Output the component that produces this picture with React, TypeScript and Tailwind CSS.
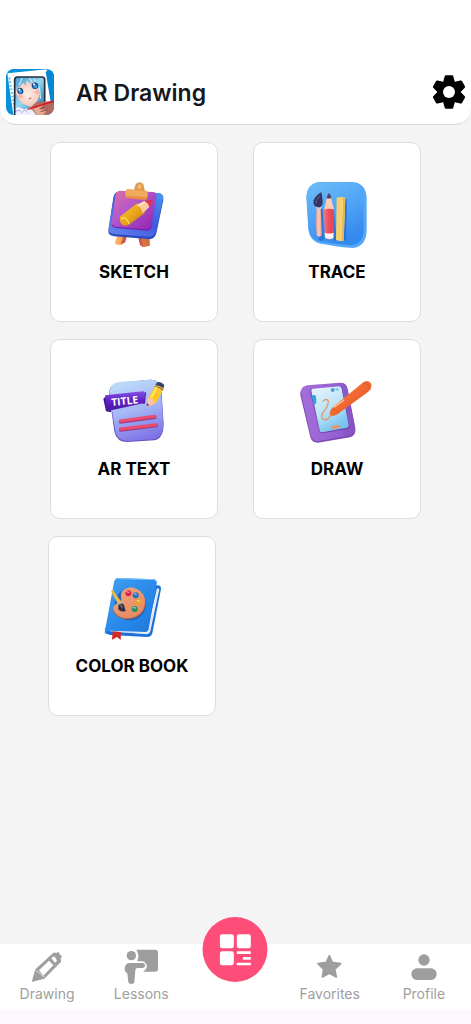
import type { ReactNode } from "react";

function AppLogo() {
  return (
    <svg viewBox="0 0 144 138" className="h-[46px] w-12 shrink-0" aria-hidden="true">
      <defs>
        <clipPath id="logoClip"><rect width="144" height="138" rx="23" /></clipPath>
        <clipPath id="screenClip"><rect x="26" y="24" width="90" height="130" rx="8" /></clipPath>
        <linearGradient id="hair" x1="0" y1="0" x2="1" y2="1">
          <stop offset="0" stopColor="#4796cf" /><stop offset="0.5" stopColor="#94d7f2" /><stop offset="1" stopColor="#2678b4" />
        </linearGradient>
        <radialGradient id="skin"><stop offset="0" stopColor="#fff0e9" /><stop offset="1" stopColor="#f5c6bb" /></radialGradient>
      </defs>
      <g clipPath="url(#logoClip)">
        <rect width="144" height="138" fill="#0790dc" />
        <path d="M4 13 122 1 140 104 111 138H22z" fill="#fff" />
        <path d="M10 26 25 116" stroke="#65b8df" strokeWidth="6" strokeDasharray="5 6" />
        <path d="M119 8 144 0V106L137 116z" fill="#0587d1" />
        <g clipPath="url(#screenClip)">
          <rect x="24" y="20" width="94" height="118" fill="#bae2ef" />
          <path d="M24 20h93v84l-19 20H34L24 92z" fill="url(#hair)" />
          <path d="M29 61Q35 40 60 36L95 42Q109 76 91 99L76 114 50 104Q27 84 29 61z" fill="url(#skin)" />
          <path d="M26 70 46 23H113l5 48-17 33q6-29-8-53L76 32l2 16-17-16-1 20-8-11-14 14z" fill="url(#hair)" />
          <path d="M48 27 40 48M70 26 78 40M83 29 100 55 104 89" stroke="#d6f7ff" strokeWidth="3" fill="none" />
          <ellipse cx="43" cy="66" rx="9" ry="10" fill="#1a4f88" transform="rotate(-15 43 66)" />
          <ellipse cx="87" cy="50" rx="10" ry="10" fill="#164b87" transform="rotate(-15 87 50)" />
          <ellipse cx="43" cy="68" rx="5" ry="6" fill="#3b9be1" /><ellipse cx="88" cy="52" rx="6" ry="6" fill="#3598e0" />
          <circle cx="40" cy="62" r="3" fill="#fff" /><circle cx="84" cy="46" r="3" fill="#fff" />
          <ellipse cx="42" cy="83" rx="9" ry="5" fill="#f2a7a3" opacity=".7" /><ellipse cx="93" cy="69" rx="8" ry="5" fill="#f2a7a3" opacity=".7" />
          <path d="m68 90 8-3" stroke="#be555c" strokeWidth="3" />
          <path d="m24 119 15-5 15 7 19-5 16 22H25z" fill="#eff0ff" />
          <path d="m27 128 12-5 8 8 10-9 8 9" stroke="#aaaadd" strokeWidth="3" fill="none" />
        </g>
        <rect x="26" y="24" width="90" height="130" rx="8" fill="none" stroke="#222e38" strokeWidth="5" />
        <path d="M62 123q3-8 14-10l12-11q9-7 20-4l28-1 8 9v32H91l-12-16z" fill="#b06c60" />
        <path d="M67 122q3-6 16-7l14-7 14 1-9 12 21 2-12 15H93l-11-17z" fill="#e3aa95" />
        <path d="m101 119 17-5m-14 14 22-6" stroke="#8f4e48" strokeWidth="3" />
        <path d="m65 119 12-4 65-21v6l-62 19z" fill="#d91e26" />
      </g>
    </svg>
  );
}

function GearIcon() {
  return (
    <svg viewBox="-51 -51 102 102" className="size-[34px]" aria-hidden="true">
      <g stroke="currentColor" strokeWidth="8" strokeLinejoin="round" fill="currentColor">
        <circle r="31" />
        <path d="M-13-32-9-46H9L13-32V32L9 46H-9L-13 32z" />
        <path d="M-13-32-9-46H9L13-32V32L9 46H-9L-13 32z" transform="rotate(60)" />
        <path d="M-13-32-9-46H9L13-32V32L9 46H-9L-13 32z" transform="rotate(120)" />
      </g>
      <circle r="18" fill="#fff" />
    </svg>
  );
}

function SketchArt() {
  return (
    <svg viewBox="-3 0 270 240" className="h-20 w-[90px]" aria-hidden="true">
      <defs>
        <linearGradient id="board" x1="0" y1="0" x2="1" y2="1"><stop stopColor="#e0709f" /><stop offset=".4" stopColor="#b458cb" /><stop offset="1" stopColor="#8c1fae" /></linearGradient>
        <linearGradient id="boardBlue" x1="0" y1="1" x2="1" y2="0"><stop stopColor="#6589ee" /><stop offset=".55" stopColor="#3f5ade" /><stop offset="1" stopColor="#4b9bef" /></linearGradient>
        <linearGradient id="wood"><stop stopColor="#ffb569" /><stop offset="1" stopColor="#ce6a3c" /></linearGradient>
        <linearGradient id="gold" x1="0" y1="0" x2="1" y2="1"><stop stopColor="#ffc538" /><stop offset=".55" stopColor="#e7a315" /><stop offset="1" stopColor="#b76920" /></linearGradient>
      </defs>
      <path d="m83 193-8 24q0 7 8 8l13-1 9-25zM145 201l6 25q4 7 15 4l13-3q2-8-2-27z" fill="url(#wood)" />
      <path d="m100 199-8 24 13-5 6-20zM145 202l5 23 9 3-4-27z" fill="#d35445" />
      <path d="M83 67 207 70q15 3 13 19l-20 97q-4 20-20 22L72 199q-18-2-17-18L70 84q3-15 13-17z" fill="#2c4cc0" />
      <path d="M84 65 207 69q14 3 12 16l-20 96q-4 18-19 19L73 192q-18-2-17-15L71 80q3-14 13-15z" fill="url(#boardBlue)" />
      <path d="M88 62 191 66q9 2 8 13l-15 92q-2 11-12 11l-97-9q-11-3-10-12L77 72q2-8 11-10z" fill="url(#board)" />
      <path d="M66 164q2 6 10 8l96 8q9 0 12-10" fill="none" stroke="#6d1cae" strokeWidth="3" />
      <path d="m131 62 6-19q12-13 23 0l5 21z" fill="#e09850" /><circle cx="149" cy="50" r="7" fill="#f8b768" />
      <path d="m111 58 55 4q9 2 8 10l-2 13q-2 6-9 5l-51-5q-7-2-6-8l1-12z" fill="#e98d45" />
      <path d="m111 58 55 4q7 1 7 5l-2 15-65-5 1-14z" fill="#f0aa5c" />
      <path d="m91 139 50-39q18 2 24 28l-48 36q-20 10-27-11-2-9 1-14z" fill="url(#gold)" />
      <path d="M94 147q14-10 23 14" fill="none" stroke="#ffe06a" strokeWidth="4" />
      <path d="m140 105 23-13q15 4 15 19l-20 19q-4-20-18-25z" fill="#ffc8a3" />
      <path d="m163 94 20-5q5 0 4 6l-9 18q-2-15-15-19z" fill="#dc3344" />
      <path d="m145 108 20-12" stroke="#fff0cc" strokeWidth="4" />
    </svg>
  );
}

function TraceArt() {
  return (
    <svg viewBox="6 0 270 240" className="h-20 w-[90px]" aria-hidden="true">
      <defs>
        <linearGradient id="traceBlue" x1=".1" y1="0" x2=".5" y2="1"><stop stopColor="#6abcf8" /><stop offset=".6" stopColor="#4c9ff5" /><stop offset="1" stopColor="#3389ee" /></linearGradient>
        <linearGradient id="brushWood"><stop stopColor="#f0a292" /><stop offset=".5" stopColor="#ffc9b4" /><stop offset="1" stopColor="#e99080" /></linearGradient>
        <linearGradient id="redPencil"><stop stopColor="#ff7670" /><stop offset=".4" stopColor="#f04f60" /><stop offset="1" stopColor="#e44459" /></linearGradient>
      </defs>
      <path d="M86 36H184Q228 37 230 84V182Q229 227 190 234q-32-1-62-7-24-5-37-6-32-8-36-43L49 82q1-39 37-46z" fill="#55a8f6" />
      <path d="M86 37H178Q219 38 221 84v98q-2 39-37 44-32-1-57-6l-33-5q-33-5-38-38L50 82q1-39 36-45z" fill="url(#traceBlue)" />
      <path d="M91 116h7l4 92-8 5-8-4zM130 112l10 95-8 9zM166 87h5l-3 124-8 2z" fill="#2a75d6" />
      <path d="m80 115 12-2 4 82q-7 10-16 0l-2-32z" fill="url(#brushWood)" />
      <path d="m77 104 18-2-1 15-14 2z" fill="#bfcdea" />
      <path d="M94 66q-18 11-23 25-2 13 5 18 15 8 21-4 3-11-3-39z" fill="#343562" /><path d="M89 79q-11 10-11 21" stroke="#696589" strokeWidth="3" fill="none" />
      <path d="M114 70q3-4 5 0l13 48-30 2z" fill="#ffcbb4" /><path d="M116 69q-3 2-6 15 7 4 14-1-4-14-8-14z" fill="#494567" />
      <path d="M102 119q15-6 30 0l-1 84q-13 9-26 0z" fill="url(#redPencil)" /><path d="M104 188q13 5 27 0l-1 16q-10 7-24 0z" fill="#fff5f3" />
      <path d="M140 83q13-4 26 1l-5 128q-9 3-23-2z" fill="#f6d16c" /><path d="m160 82 6 1-5 129-6 1z" fill="#e2b65b" />
      <path d="M144 96h6m-6 13h4m-4 13h6m-6 13h4m-4 13h6m-6 13h4m-4 13h6" stroke="#e6bd5e" strokeWidth="2" />
    </svg>
  );
}

function TextArt() {
  return (
    <svg viewBox="-3 -9 270 240" className="h-20 w-[90px]" aria-hidden="true">
      <defs>
        <linearGradient id="paper" x1=".3" y1="0" x2=".6" y2="1"><stop stopColor="#bcdcf8" /><stop offset=".5" stopColor="#a5b6f6" /><stop offset="1" stopColor="#7d72e6" /></linearGradient>
        <linearGradient id="titleBand" x1="0" y1="0" x2="0" y2="1"><stop stopColor="#8251e7" /><stop offset=".5" stopColor="#6122c3" /><stop offset="1" stopColor="#4914a5" /></linearGradient>
      </defs>
      <path d="M84 38 180 29q29-1 34 28l7 104q0 44-28 50l-81 5q-32 0-39-31L57 68q3-26 27-30z" fill="#6756c0" />
      <path d="M86 36 179 29q29-1 33 27l8 103q-1 43-28 49l-79 5q-31 0-37-29L58 68q2-28 28-32z" fill="url(#paper)" />
      <path d="m49 78-9 8 8 38 16 3zM164 70l4-4-3 34-6 3z" fill="#40118c" />
      <path d="m45 76 114-12q7 0 6 8l-2 27-106 23q-7 0-9-8z" fill="url(#titleBand)" />
      <text x="65" y="108" fontFamily="Open Sans, sans-serif" fontWeight="700" fontSize="31" fill="#fff" transform="rotate(-6 65 108)">TITLE</text>
      <path d="M91 156 195 142M92 180l107-13" stroke="#9f3a86" strokeWidth="10" strokeLinecap="round" />
      <path d="M91 153 195 139M92 177l107-13" stroke="#eb4b6c" strokeWidth="9" strokeLinecap="round" />
      <path d="m175 83 23-40 24 10-23 45-27 12z" fill="#ffc629" /><path d="m183 83 23-41" stroke="#ffe46c" strokeWidth="6" />
      <path d="m174 83 15 5 8 11-20 10q-6 3-7-3z" fill="#ffc2aa" /><path d="m171 98-1 11 8-3z" fill="#7b386d" />
      <path d="m194 50 6-12q11-6 23 7l-5 17q-8-11-24-12z" fill="#31436f" />
      <path d="m195 48q14-1 25 10" fill="none" stroke="#e5a82b" strokeWidth="4" />
    </svg>
  );
}

function DrawArt() {
  return (
    <svg viewBox="6 -9 270 240" className="h-20 w-[90px]" aria-hidden="true">
      <defs>
        <linearGradient id="purpleFrame"><stop stopColor="#a56fda" /><stop offset=".7" stopColor="#935ed0" /><stop offset="1" stopColor="#8650c4" /></linearGradient>
        <linearGradient id="tablet" x1="0" y1="0" x2=".5" y2="1"><stop stopColor="#ebf7fd" /><stop offset=".6" stopColor="#b8e2f6" /><stop offset="1" stopColor="#78c3f0" /></linearGradient>
        <linearGradient id="orangePen" x1="0" y1="0" x2="1" y2="1"><stop stopColor="#ff8a55" /><stop offset=".5" stopColor="#f16830" /><stop offset="1" stopColor="#d94e2a" /></linearGradient>
      </defs>
      <path d="M51 50 152 39q17-1 21 18l23 118q3 21-16 27L83 218q-18 0-22-17L31 75q-3-20 20-25z" fill="#7b48b8" />
      <path d="M52 46 151 38q17 0 20 16l24 118q2 20-15 24L84 214q-17 0-21-16L33 69q-2-19 19-23z" fill="url(#purpleFrame)" />
      <path d="M65 58 148 48q6 0 9 8l22 112q1 8-7 9l-75 13q-7 1-9-7L61 67q-2-7 4-9z" fill="#7344a6" />
      <path d="M69 56 146 49q7 0 9 7l21 109q1 7-6 8l-73 14q-7 1-8-6L64 64q-1-7 5-8z" fill="url(#tablet)" />
      <path d="m64 76 11-1q5 7 4 24l-7 5z" fill="#31a3dc" />
      <circle cx="128" cy="60" r="6" fill="#4f9dd3" /><circle cx="141" cy="58" r="5" fill="#85cbe8" />
      <path d="m124 169 22-4q5 0 5 6l-3 2-23 4q-4-2-1-8z" fill="#e99268" />
      <path d="M99 94q11-12 16 0-1 17-14 31-13 17 1 24 14 3 24-20" fill="none" stroke="#e69669" strokeWidth="4" strokeLinecap="round" />
      <path d="m127 113 90-74q18-14 27 3 2 13-10 24l-92 67q-15 8-21 2-6-7 6-22z" fill="url(#orangePen)" />
      <path d="m220 38q18 4 20 22" fill="none" stroke="#dc5630" strokeWidth="3" />
      <path d="m127 119q12-4 18 11" fill="none" stroke="#e05228" strokeWidth="3" />
      <path d="m132 111 29-20" stroke="#ffb78c" strokeWidth="5" strokeLinecap="round" />
    </svg>
  );
}

function BookArt() {
  return (
    <svg viewBox="81 -3 270 240" className="h-20 w-[90px]" aria-hidden="true">
      <defs>
        <linearGradient id="cover" x1="0" y1="0" x2="1" y2="1"><stop stopColor="#41a0f2" /><stop offset=".6" stopColor="#2787e9" /><stop offset="1" stopColor="#1f74d6" /></linearGradient>
        <linearGradient id="palette" x1="0" y1="0" x2=".6" y2="1"><stop stopColor="#f2a77c" /><stop offset="1" stopColor="#e58a66" /></linearGradient>
      </defs>
      <path d="m190 58 103 3q11 1 10 11l-26 133q-3 11-15 11l-111-6q-19-2-16-17z" fill="#1c72d8" />
      <path d="m265 180 26-110 7 2-27 126q-2 9-10 10l-110-9q-8-6 0-10z" fill="#f2f5fb" />
      <path d="m268 196 26-124M155 199l107 6" stroke="#cbd7ea" strokeWidth="2" />
      <path d="M173 39 282 43q11 2 8 13l-24 136q-2 9-10 9l-108-4q-11 1-13 12-2-7 1-17L162 52q2-11 11-13z" fill="url(#cover)" />
      <path d="M174 41 282 44q5 1 6 7" stroke="#75c1fa" strokeWidth="3" fill="none" />
      <path d="m158 199 25 3-1 23-11-9-15 8z" fill="#d62824" />
      <ellipse cx="211" cy="118" rx="47" ry="48" fill="#1b66c0" />
      <path d="M214 69q37 6 43 39 1 37-32 51-39 11-61-13-13-15 4-27 17-4 15-17-7-26 31-33z" fill="#b06048" />
      <path d="M213 67q36 5 42 37 3 36-30 51-38 13-60-12-13-15 4-27 17-4 15-17-7-26 29-32z" fill="url(#palette)" />
      <circle cx="205" cy="85" r="9" fill="#d9244b" /><circle cx="227" cy="91" r="9" fill="#1f70cc" /><circle cx="236" cy="111" r="9" fill="#e7a322" /><circle cx="224" cy="132" r="9" fill="#1b9460" />
      <path d="m200 80 6 2m17 4 6 2m3 18 6 2m-18 19 6 2" stroke="#fff" opacity=".5" strokeWidth="4" strokeLinecap="round" />
      <path d="m154 81q-2-8 6-5l24 35-10 7z" fill="#efb746" /><path d="m172 115 12-8 6 10-13 8z" fill="#c5b1aa" />
      <path d="M175 121q8-9 16-3l6 20q-16 5-22-6z" fill="#343344" /><path d="m182 119 4 9" stroke="#9997a6" strokeWidth="3" />
    </svg>
  );
}

function ToolCard({ label, children }: { label: string; children: ReactNode }) {
  return (
    <button type="button" className="flex h-[180px] flex-col items-center rounded-[10px] border border-[#dedede] bg-white pt-[27px]">
      {children}
      <span className="mt-2.5 text-[17px] leading-6 font-bold whitespace-nowrap text-black">{label}</span>
    </button>
  );
}

function PencilIcon() {
  return (
    <svg viewBox="96 123 96 96" className="size-8" fill="#9e9e9e" aria-hidden="true">
      <path fillRule="evenodd" d="m98 216 11-38 51-47q8-7 12-1l4-4 5 2 1 6 5 2 1 6-4 4q6 6-2 14l-46 46zM120 181l13 16 30-31-13-14zM157 145l11 13 6-6q-3-10-11-13z" />
      <path d="m110 180 26 22" stroke="#fff" strokeWidth="2" />
    </svg>
  );
}

function LessonsIcon() {
  return (
    <svg viewBox="372 117 105 105" className="size-[35px]" fill="#9e9e9e" aria-hidden="true">
      <path d="M409 119h56q9 0 9 9v48q0 9-9 9h-35l5-5q9-8 3-19-4-7-13-7h-14q6-8 4-18-1-10-6-17z" />
      <circle cx="394" cy="137" r="14" />
      <path d="M390 159h37q8 0 8 7 0 8-8 8h-14q-7 0-7 8l-3 35q-1 5-9 5t-9-5l-3-27q-9-4-8-15 2-16 16-16z" />
    </svg>
  );
}

function StarIcon() {
  return (
    <svg viewBox="0 0 75 75" className="size-[25px]" fill="#9e9e9e" stroke="#9e9e9e" strokeWidth="5" strokeLinejoin="round" aria-hidden="true">
      <path d="m37 5 9 20 25 4-18 17 5 23-21-11-21 11 4-23L3 29l25-4z" />
    </svg>
  );
}

function ProfileIcon() {
  return (
    <svg viewBox="0 0 78 78" className="size-[26px]" fill="#9e9e9e" aria-hidden="true">
      <circle cx="39" cy="18" r="17" /><rect x="1" y="43" width="76" height="35" rx="17" />
    </svg>
  );
}

function NavItem({ label, children }: { label: string; children: ReactNode }) {
  return (
    <a href="#" className="flex flex-col items-center text-[#9e9e9e]">
      <span className="flex h-10 items-center justify-center pt-[5px]">{children}</span>
      <span className="text-[14px] leading-5">{label}</span>
    </a>
  );
}

export default function App() {
  return (
    <div className="flex min-h-screen flex-col bg-[#f4f4f4] font-['Inter',sans-serif]">
      <header className="flex items-center rounded-b-2xl border-b border-[#d8d8d8] bg-white pt-[69px] pr-[5px] pb-[9px] pl-1.5">
        <AppLogo />
        <h1 className="ml-[22px] flex-1 pt-0.5 text-[23px] leading-8 font-semibold text-[#15171c]">AR Drawing</h1>
        <button type="button" aria-label="Settings" className="text-black">
          <GearIcon />
        </button>
      </header>
      <main className="flex flex-1 flex-col gap-[17px] pt-[17px] pb-12">
        <div className="grid grid-cols-2 gap-x-[35px] gap-y-[17px] px-[50px]">
          <ToolCard label="SKETCH"><SketchArt /></ToolCard>
          <ToolCard label="TRACE"><TraceArt /></ToolCard>
          <ToolCard label="AR TEXT"><TextArt /></ToolCard>
          <ToolCard label="DRAW"><DrawArt /></ToolCard>
        </div>
        <div className="grid grid-cols-2 gap-x-[39px] px-12">
          <ToolCard label="COLOR BOOK"><BookArt /></ToolCard>
        </div>
      </main>
      <footer className="bg-[#fdf7ff] pb-[15px]">
        <nav className="grid grid-cols-5 bg-white pb-[5px]">
          <NavItem label="Drawing"><PencilIcon /></NavItem>
          <NavItem label="Lessons"><LessonsIcon /></NavItem>
          <div className="relative">
            <button type="button" aria-label="Home" className="absolute -top-[27px] left-1/2 flex size-[65px] -translate-x-1/2 items-center justify-center rounded-full bg-[#ff4d79]">
              <svg viewBox="0 0 96 96" className="size-8" fill="#fff" aria-hidden="true">
                <rect x="1" y="1" width="42" height="42" rx="7" /><rect x="52" y="1" width="42" height="42" rx="7" /><rect x="1" y="52" width="42" height="42" rx="7" />
                <rect x="52" y="52" width="42" height="8" rx="2" /><rect x="70" y="69" width="24" height="8" rx="2" /><rect x="52" y="86" width="42" height="8" rx="2" />
              </svg>
            </button>
          </div>
          <NavItem label="Favorites"><StarIcon /></NavItem>
          <NavItem label="Profile"><ProfileIcon /></NavItem>
        </nav>
      </footer>
    </div>
  );
}
